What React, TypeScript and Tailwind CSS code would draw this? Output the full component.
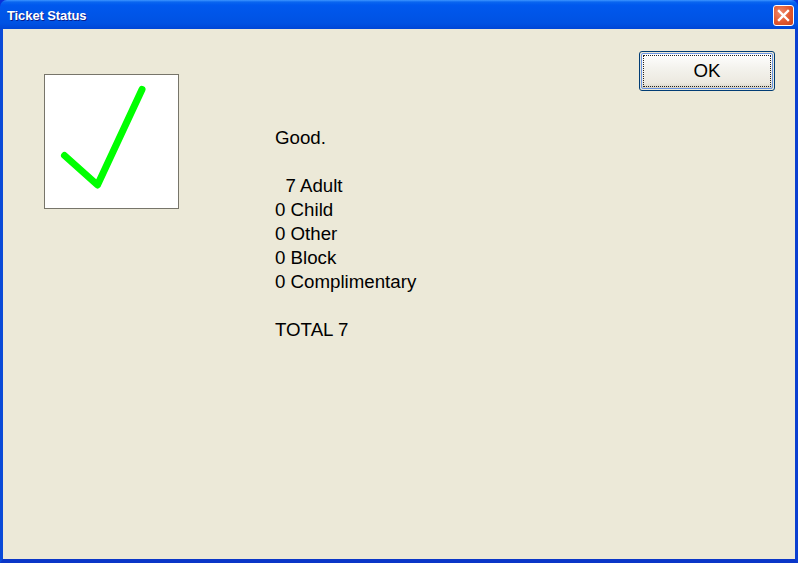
import React from "react";

export default function App() {
  const lines = ["Good.", "", "  7 Adult", "0 Child", "0 Other", "0 Block", "0 Complimentary", "", "TOTAL 7"];
  return (
    <div className="w-[798px] h-[563px] flex flex-col overflow-hidden bg-[#0831d9]" style={{ fontFamily: '"Liberation Sans", Arial, sans-serif' }}>
      <div className="h-[29px] shrink-0 flex items-center pl-[7px] pr-[4px] rounded-t-[7px] bg-[linear-gradient(to_bottom,#3d95ff_0px,#0a66f0_2px,#0058ee_5px,#0055e8_50%,#0052e3_80%,#0046d6_100%)]">
        <span className="mt-[3px] text-white font-bold text-[13px] tracking-[-0.1px] [text-shadow:1px_1px_0_#0a1e8c]">Ticket Status</span>
        <div className="ml-auto mt-[2px] w-[21px] h-[21px] rounded-[3px] border border-white flex items-center justify-center bg-[radial-gradient(circle_at_35%_35%,#ef8a6c_0%,#e2582f_55%,#c9431d_100%)]">
          <svg width="13" height="13" viewBox="0 0 13 13">
            <path d="M2 2 L11 11 M11 2 L2 11" stroke="white" strokeWidth="2.4" strokeLinecap="square" />
          </svg>
        </div>
      </div>
      <div className="flex-1 flex border-l-[3px] border-r-[3px] border-b-[4px] border-l-[#0a4ad8] border-r-[#0a3fd0] border-b-[#0a36c8] bg-[#ece9d8]">
        <div className="flex-1 flex items-start">
          <div className="ml-[41px] mt-[45px] w-[135px] h-[135px] border border-[#77756a] bg-white shrink-0">
            <svg width="133" height="133" viewBox="0 0 133 133">
              <polyline points="19.5,80.5 52.5,110 97,14.5" fill="none" stroke="#00ff00" strokeWidth="7" strokeLinecap="round" strokeLinejoin="round" />
            </svg>
          </div>
          <div className="ml-[96px] mt-[97px] text-[18.7px] leading-[24px] text-black whitespace-pre">
            {lines.map((l, i) => (
              <div key={i} className="h-[24px]">{l}</div>
            ))}
          </div>
          <div className="ml-auto mr-[20px] mt-[22px] w-[136px] h-[40px] rounded-[3px] border border-[#003c74] p-[1px] bg-[#ece9d8]">
            <div className="w-full h-full rounded-[2px] border border-[#6a95e2] bg-[linear-gradient(to_bottom,#ffffff_0%,#f4f3ee_40%,#ece9e0_85%,#d8d3c4_100%)] p-[1px]">
              <div className="w-full h-full border border-dotted border-[#222] flex items-center justify-center text-[18.7px] text-black">OK</div>
            </div>
          </div>
        </div>
      </div>
    </div>
  );
}
